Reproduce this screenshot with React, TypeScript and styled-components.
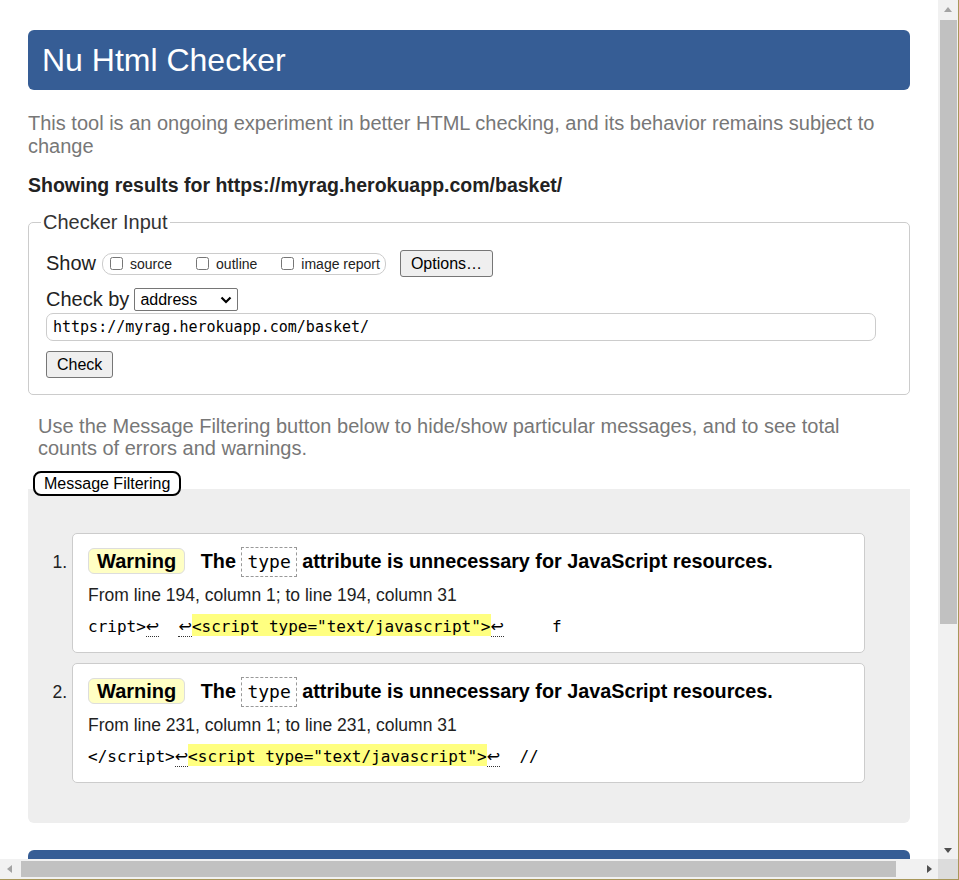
import * as React from 'react';
import styled, { createGlobalStyle } from 'styled-components';

const GlobalStyle = createGlobalStyle`
    html, body {
        margin: 0;
        padding: 0;
        overflow: hidden;
        background: #fff;
    }
    body {
        font-family: "Liberation Sans", Arial, sans-serif;
    }
    * {
        box-sizing: border-box;
    }
`;

const Window = styled.div`
    width: 959px;
    height: 880px;
    border-right: 1px solid #a8975a;
    border-bottom: 1px solid #a8975a;
    display: grid;
    grid-template-columns: 1fr 20px;
    grid-template-rows: 1fr 20px;
`;

const Viewport = styled.div`
    overflow: hidden;
    padding: 30px 28px 0;
    background: #fff;
`;

const VScroll = styled.div`
    background: #f1f1f1;
    display: flex;
    flex-direction: column;
`;

const HScroll = styled.div`
    background: #f1f1f1;
    display: flex;
`;

const Corner = styled.div`
    background: #dcdcdc;
`;

const ArrowCell = styled.div`
    flex: none;
    width: 20px;
    height: 20px;
    display: flex;
    align-items: center;
    justify-content: center;
`;

const Arrow = styled.span<{ $dir: 'up' | 'down' | 'left' | 'right'; $active?: boolean }>`
    width: 0;
    height: 0;
    border: 4px solid transparent;
    ${(p) => {
        const c = p.$active ? '#505050' : '#a3a3a3';
        switch (p.$dir) {
            case 'up':
                return `border-bottom: 5px solid ${c}; border-top-width: 0; margin-top: -2px;`;
            case 'down':
                return `border-top: 5px solid ${c}; border-bottom-width: 0; margin-top: 2px;`;
            case 'left':
                return `border-right: 5px solid ${c}; border-left-width: 0; margin-left: -2px;`;
            default:
                return `border-left: 5px solid ${c}; border-right-width: 0; margin-left: 2px;`;
        }
    }}
`;

const VTrack = styled.div`
    flex: 1;
`;

const VThumb = styled.div`
    height: 604px;
    margin: 0 1px 0 2px;
    background: #c1c1c1;
`;

const HTrack = styled.div`
    flex: 1;
    padding-left: 1px;
`;

const HThumb = styled.div`
    width: 875px;
    height: 16px;
    margin-top: 2px;
    background: #c1c1c1;
`;

const Header = styled.h1`
    margin: 0;
    height: 60px;
    display: flex;
    align-items: center;
    padding: 0 14px;
    background: #365d95;
    color: #fff;
    border-radius: 6px;
    font-size: 32px;
    font-weight: normal;
`;

const Intro = styled.p`
    margin: 22px 0 0;
    font-size: 20px;
    line-height: 23px;
    color: #777;
`;

const Showing = styled.p`
    margin: 16px 0 0;
    font-size: 19.5px;
    line-height: 22px;
    font-weight: bold;
    color: #222;
`;

const Fieldset = styled.fieldset`
    margin: 15px 0 0;
    min-inline-size: 0;
    border: 1px solid #ccc;
    border-radius: 5px;
    padding: 16px 33px 16px 17px;
`;

const Legend = styled.legend`
    margin-left: -5px;
    padding: 0 2px;
    font-size: 20px;
    line-height: 23px;
    color: #333;
`;

const Row = styled.div<{ $gap?: number }>`
    display: flex;
    align-items: center;
    margin-top: ${(p) => p.$gap || 0}px;
`;

const FieldLabel = styled.span`
    font-size: 20px;
    line-height: 23px;
    color: #222;
    margin-right: 5px;
`;

const CheckGroup = styled.div`
    display: flex;
    align-items: center;
    height: 22px;
    margin-left: 1px;
    border: 1px solid #ccc;
    border-radius: 10px;
    padding: 0 5px 0 7px;
`;

const CheckItem = styled.label`
    display: flex;
    align-items: center;
    font-size: 14px;
    line-height: 16px;
    color: #222;
    & + & {
        margin-left: 24px;
    }
`;

const Box = styled.input`
    width: 13px;
    height: 13px;
    margin: 0 7px 0 0;
    align-self: flex-start;
    margin-top: 1px;
`;

const Button = styled.button<{ $h?: number }>`
    height: ${(p) => p.$h || 27}px;
    padding: 0 10px;
    font-family: "Liberation Sans", Arial, sans-serif;
    font-size: 16px;
    color: #000;
    background: #efefef;
    border: 1px solid #767676;
    border-radius: 3px;
`;

const OptionsButton = styled(Button)`
    margin-left: 14px;
`;

const SelectBox = styled.div`
    width: 104px;
    height: 23px;
    display: flex;
    align-items: center;
    justify-content: space-between;
    padding: 0 5px;
    border: 1px solid #767676;
    border-radius: 2px;
    font-size: 16px;
    color: #000;
`;

const UrlInput = styled.input`
    display: block;
    margin-top: 2px;
    width: 830px;
    height: 28px;
    padding: 0 6px;
    border: 1px solid #ccc;
    border-radius: 7px;
    font-family: "DejaVu Sans Mono", monospace;
    font-size: 15px;
    color: #000;
    outline: none;
`;

const CheckButton = styled(Button)`
    display: block;
    margin-top: 10px;
`;

const Note = styled.p`
    margin: 20px 10px 0;
    font-size: 20px;
    line-height: 22px;
    color: #777;
`;

const FilterButton = styled.button`
    position: relative;
    z-index: 1;
    display: block;
    margin: 12px 0 -7px 5px;
    height: 25px;
    padding: 0 9px;
    background: #fff;
    border: 2px solid #000;
    border-radius: 8px;
    font-family: "Liberation Sans", Arial, sans-serif;
    font-size: 16px;
    color: #000;
`;

const Panel = styled.div`
    background: #eee;
    border-radius: 0 0 6px 6px;
    padding: 44px 45px 40px 44px;
`;

const List = styled.ol`
    margin: 0;
    padding: 0;
    list-style: decimal outside;
`;

const Card = styled.li`
    background: #fff;
    border: 1px solid #ccc;
    border-radius: 5px;
    padding: 12px 15px 14px;
    font-size: 17.5px;
    color: #222;
    & + & {
        margin-top: 10px;
    }
`;

const Title = styled.p`
    margin: 0;
    font-size: 19.8px;
    line-height: 30px;
    font-weight: bold;
    color: #000;
`;

const Badge = styled.span`
    display: inline-block;
    font-size: 20px;
    line-height: 22px;
    padding: 1px 8px;
    margin-right: 10px;
    background: #ffffc4;
    border: 1px solid #ddd;
    border-radius: 6px;
`;

const Code = styled.code`
    display: inline-block;
    font-family: "DejaVu Sans Mono", monospace;
    font-size: 18px;
    font-weight: normal;
    line-height: 20px;
    padding: 4px 5px;
    border: 1px dashed #999;
`;

const Location = styled.p`
    margin: 7px 0 0;
    line-height: 22px;
`;

const Extract = styled.p`
    margin: 10px 0 0;
    font-family: "DejaVu Sans Mono", monospace;
    font-size: 16px;
    line-height: 22px;
    color: #000;
    white-space: pre;
`;

const Lf = styled.span`
    font-family: "DejaVu Sans", sans-serif;
    border-bottom: 1px dotted #333;
`;

const Mark = styled.b`
    font-weight: normal;
    background: #ffff80;
    padding-top: 3px;
`;

const Footer = styled.div`
    margin-top: 27px;
    height: 60px;
    background: #365d95;
    border-radius: 6px 6px 0 0;
`;

const Chevron = () => (
    <svg width="12" height="8" viewBox="0 0 12 8">
        <path d="M1.5 1.5 L6 6 L10.5 1.5" fill="none" stroke="#000" strokeWidth="2.2" />
    </svg>
);

interface Message {
    from: number;
    to: number;
    before: React.ReactNode;
    after: string;
}

const TAG = '<script type="text/javascript">';

const messages: Message[] = [
    {
        from: 194,
        to: 194,
        before: (
            <>
                cript&gt;<Lf>↩</Lf>  <Lf>↩</Lf>
            </>
        ),
        after: '     f',
    },
    {
        from: 231,
        to: 231,
        before: (
            <>
                &lt;/script&gt;<Lf>↩</Lf>
            </>
        ),
        after: '  //',
    },
];

export default function App() {
    return (
        <>
            <GlobalStyle />
            <Window>
                <Viewport>
                    <Header>Nu Html Checker</Header>
                    <Intro>
                        This tool is an ongoing experiment in better HTML checking, and its behavior remains subject to change
                    </Intro>
                    <Showing>Showing results for https://myrag.herokuapp.com/basket/</Showing>
                    <Fieldset>
                        <Legend>Checker Input</Legend>
                        <Row>
                            <FieldLabel>Show</FieldLabel>
                            <CheckGroup>
                                <CheckItem>
                                    <Box type="checkbox" />
                                    source
                                </CheckItem>
                                <CheckItem>
                                    <Box type="checkbox" />
                                    outline
                                </CheckItem>
                                <CheckItem>
                                    <Box type="checkbox" />
                                    image report
                                </CheckItem>
                            </CheckGroup>
                            <OptionsButton>Options…</OptionsButton>
                        </Row>
                        <Row $gap={11}>
                            <FieldLabel>Check by</FieldLabel>
                            <SelectBox>
                                address
                                <Chevron />
                            </SelectBox>
                        </Row>
                        <UrlInput readOnly value="https://myrag.herokuapp.com/basket/" />
                        <CheckButton>Check</CheckButton>
                    </Fieldset>
                    <Note>
                        Use the Message Filtering button below to hide/show particular messages, and to see total counts of errors and warnings.
                    </Note>
                    <FilterButton>Message Filtering</FilterButton>
                    <Panel>
                        <List>
                            {messages.map((m) => (
                                <Card key={m.from}>
                                    <Title>
                                        <Badge>Warning</Badge> The <Code>type</Code> attribute is unnecessary for JavaScript resources.
                                    </Title>
                                    <Location>
                                        From line {m.from}, column 1; to line {m.to}, column 31
                                    </Location>
                                    <Extract>
                                        {m.before}
                                        <Mark>{TAG}</Mark>
                                        <Lf>↩</Lf>
                                        {m.after}
                                    </Extract>
                                </Card>
                            ))}
                        </List>
                    </Panel>
                    <Footer />
                </Viewport>
                <VScroll>
                    <ArrowCell>
                        <Arrow $dir="up" />
                    </ArrowCell>
                    <VTrack>
                        <VThumb />
                    </VTrack>
                    <ArrowCell>
                        <Arrow $dir="down" $active />
                    </ArrowCell>
                </VScroll>
                <HScroll>
                    <ArrowCell>
                        <Arrow $dir="left" />
                    </ArrowCell>
                    <HTrack>
                        <HThumb />
                    </HTrack>
                    <ArrowCell>
                        <Arrow $dir="right" $active />
                    </ArrowCell>
                </HScroll>
                <Corner />
            </Window>
        </>
    );
}
